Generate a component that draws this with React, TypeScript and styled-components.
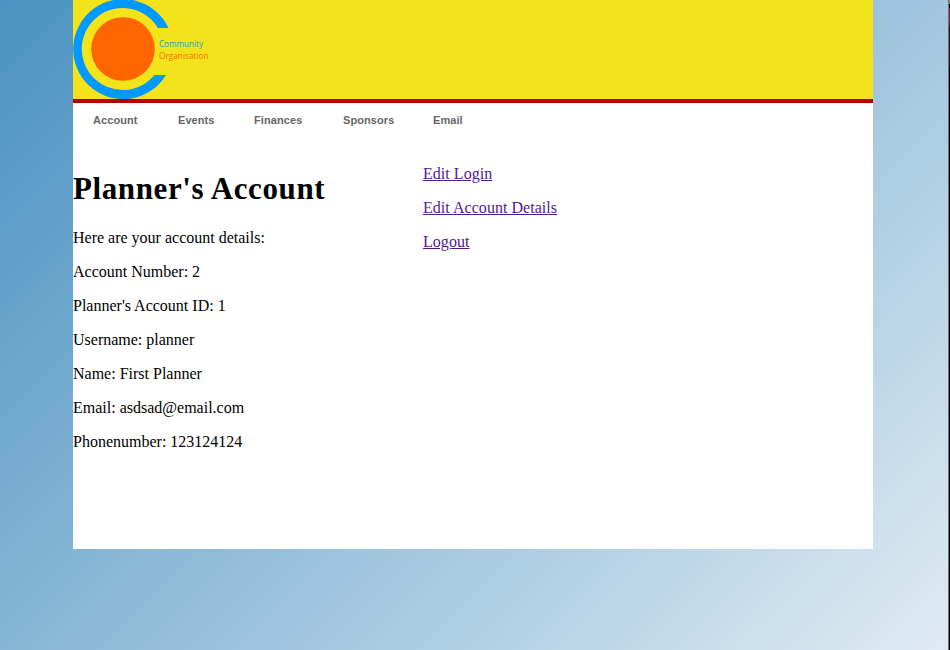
import React from "react";
import styled, { createGlobalStyle } from "styled-components";

const GlobalStyle = createGlobalStyle`
  html, body, #root { height: 100%; }
  body { margin: 0; overflow: hidden; }
`;

const Page = styled.div`
  box-sizing: border-box;
  height: 650px;
  width: 950px;
  display: flex;
  font: 16px/18px "Liberation Serif", serif;
  color: #000;
`;

const Backdrop = styled.div`
  flex: 1;
  background: linear-gradient(135deg, #4b93c1 0%, #62a0c9 17%, #dfebf3 100%);
`;

const ScreenEdge = styled.div`
  box-sizing: border-box;
  width: 2px;
  border-left: 1px solid #727272;
  background: linear-gradient(#9b7431 0 4px, #0a0508 4px 8px, #821c49 8px 22px, #2c0a18 28px, #1a0810 67px, #000 68px);
`;

const Wrapper = styled.div`
  width: 800px;
  height: 549px;
  margin-left: 73px;
  background: #fff;
`;

const Header = styled.header`
  height: 99px;
  background: #f3e31b;
  border-bottom: 4px solid #b50000;
`;

const Logo = styled.svg`
  display: block;
  font-family: "Open Sans", sans-serif;
  font-size: 8.8px;
  font-weight: 500;
`;

const Nav = styled.nav`
  display: flex;
  height: 34px;
`;

const NavLink = styled.a<{ $width: number }>`
  box-sizing: border-box;
  width: ${(p) => p.$width}px;
  padding-left: 20px;
  font: bold 11px/34px "Liberation Sans", Arial, sans-serif;
  letter-spacing: 0.08px;
  color: #666;
`;

const Content = styled.main`
  display: flex;
`;

const Details = styled.section`
  width: 350px;
`;

const Title = styled.h1`
  margin: 33px 0 22px;
  font-size: 31px;
  line-height: 37px;
  letter-spacing: 0.6px;
`;

const Line = styled.p`
  margin: 0 0 16px;
`;

const Actions = styled.section`
  padding-top: 28px;
`;

const ActionLink = styled.a`
  color: #551a8b;
  text-decoration: underline;
  letter-spacing: 0.04px;
`;

const navItems = [
  { label: "Account", width: 85 },
  { label: "Events", width: 76 },
  { label: "Finances", width: 89 },
  { label: "Sponsors", width: 90 },
  { label: "Email", width: 70 },
];

const details = [
  "Here are your account details:",
  "Account Number: 2",
  "Planner's Account ID: 1",
  "Username: planner",
  "Name: First Planner",
  "Email: asdsad@email.com",
  "Phonenumber: 123124124",
];

const actions = ["Edit Login", "Edit Account Details", "Logout"];

export default function App() {
  return (
    <Page>
      <GlobalStyle />
      <Backdrop>
        <Wrapper>
          <Header>
            <Logo width="140" height="99" viewBox="0 0 140 99">
              <path
                d="M95.5 28 A50 50 0 1 0 93 75 H81.5 A41 41 0 1 1 85 28 Z"
                fill="#0099ff"
              />
              <circle cx="50" cy="49" r="31.8" fill="#ff6600" />
              <text x="86" y="47" fill="#1ea0c8" textLength="44" lengthAdjust="spacingAndGlyphs">Community</text>
              <text x="86" y="59" fill="#fc7006" textLength="49.5" lengthAdjust="spacingAndGlyphs">Organisation</text>
            </Logo>
          </Header>
          <Nav>
            {navItems.map((n) => (
              <NavLink key={n.label} $width={n.width}>{n.label}</NavLink>
            ))}
          </Nav>
          <Content>
            <Details>
              <Title>Planner's Account</Title>
              {details.map((d) => <Line key={d}>{d}</Line>)}
            </Details>
            <Actions>
              {actions.map((a) => (
                <Line key={a}><ActionLink>{a}</ActionLink></Line>
              ))}
            </Actions>
          </Content>
        </Wrapper>
      </Backdrop>
      <ScreenEdge />
    </Page>
  );
}
